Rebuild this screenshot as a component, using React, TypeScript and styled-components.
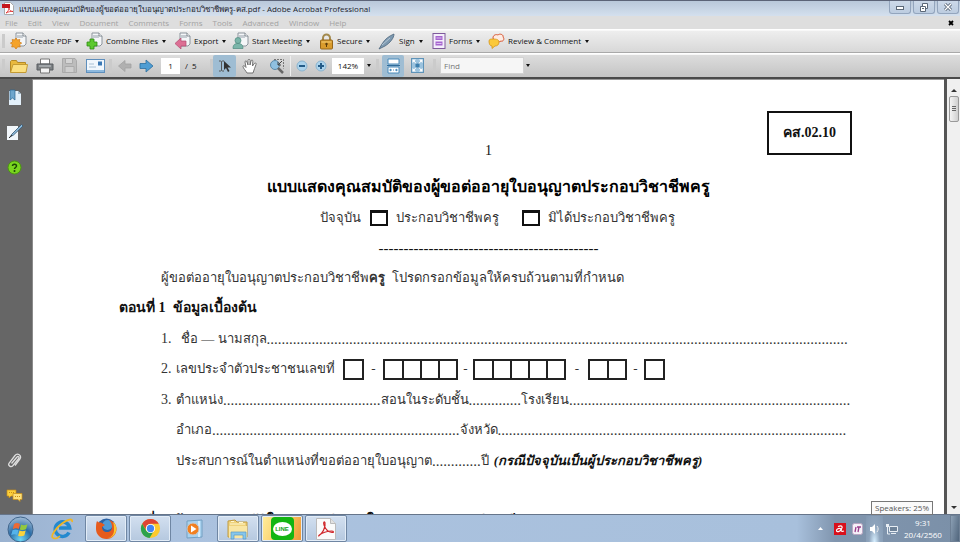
import React from "react";
import styled, { createGlobalStyle } from "styled-components";

const uiFont = `"Open Sans", "Noto Sans", sans-serif`;
const docFont = `"Liberation Serif", serif`;

const GlobalStyle = createGlobalStyle`
  * { box-sizing: border-box; }
  body { margin: 0; background: #fff; font-family: ${uiFont}; font-size: 8px; color: #111; }
  button, input, select { font: inherit; color: inherit; margin: 0; padding: 0; }
  button { border: 0; background: none; cursor: pointer; }
  svg { display: block; flex: none; }
`;

const Desktop = styled.div`
  display: flex;
  flex-direction: column;
  height: 100vh;
  overflow: hidden;
`;

/* ---------- window chrome ---------- */

const TitleBar = styled.header`
  display: flex;
  align-items: center;
  gap: 5px;
  height: 16px;
  flex: none;
  padding-left: 2px;
  border-top: 1px solid #5c6478;
  background: linear-gradient(#b9c8da, #d4e0ee);
`;

const WindowTitle = styled.h1`
  flex: 1;
  margin: 0;
  font-size: 8px;
  line-height: 14px;
  font-weight: 400;
  white-space: nowrap;
  color: #1c232c;
`;

const WindowButtons = styled.div`
  display: flex;
  gap: 2px;
  align-self: flex-start;
  padding-right: 1px;
`;

const WindowButton = styled.button`
  display: grid;
  place-items: center;
  width: 22px;
  height: 13px;
  border: 1px solid #93a5bd;
  border-top: 0;
  border-radius: 0 0 3px 3px;
  background: linear-gradient(#ccd9e9, #bccce0);
`;

const MenuBar = styled.nav`
  display: flex;
  align-items: center;
  height: 13px;
  flex: none;
  gap: 10px;
  padding: 0 4px 0 5px;
  background: #dedede;
  color: #a3a3a3;
`;

const MenuButton = styled.button`
  line-height: 12px;
`;

const CloseDocument = styled.button`
  margin-left: auto;
  width: 8px;
  height: 8px;
`;

const TaskBar = styled.div`
  display: flex;
  align-items: center;
  height: 24px;
  flex: none;
  border-top: 1px solid #fff;
  border-bottom: 1px solid #a9a9a9;
  background: linear-gradient(#efefef, #d8d8d8);
  box-shadow: inset 0 1px #f8f8f8;
  padding-left: 2px;
  gap: 5px;
`;

const ToolBar = styled(TaskBar)`
  gap: 0;
  background: linear-gradient(#dedede, #c4c4c4);
  border-bottom: 0;
`;

const Grip = styled.span`
  width: 3px;
  height: 14px;
  flex: none;
  background: #cbcbcb;
`;

const TaskButton = styled.button<{ $width: number }>`
  display: flex;
  align-items: center;
  gap: 3px;
  width: ${(p) => p.$width}px;
  flex: none;
  line-height: 14px;
  white-space: nowrap;
`;

const Caret = styled.span`
  margin-left: 1px;
  border: 2px solid transparent;
  border-top: 3px solid #111;
  border-bottom: 0;
`;

const ToolButton = styled.button<{ $active?: boolean; $width?: number }>`
  display: grid;
  place-items: center;
  width: ${(p) => p.$width ?? 27}px;
  height: 22px;
  flex: none;
  border-radius: 2px;
  background: ${(p) => (p.$active ? "#9fbdd3" : "transparent")};
`;

const PageBox = styled.input`
  width: 19px;
  height: 16px;
  margin-left: 5px;
  border: 0;
  background: #fff;
  text-align: center;
`;

const PageTotal = styled.span`
  width: 25px;
  margin-left: 5px;
`;

const ZoomBox = styled.input`
  width: 32px;
  height: 16px;
  margin-left: 4px;
  border: 0;
  background: #fff;
  text-align: center;
`;

const FindBox = styled.input`
  width: 84px;
  height: 17px;
  margin-left: 2px;
  border: 1px solid #d2d2d2;
  background: #f6f6f6;
  padding-left: 3px;
  &::placeholder { color: #777; opacity: 1; }
`;

const Separator = styled.span`
  width: 1px;
  height: 20px;
  background: #eee;
`;

/* ---------- document area ---------- */

const Workspace = styled.div`
  display: flex;
  flex: 1;
  min-height: 0;
  border-top: 2px solid #4a4a4a;
  background: #666;
`;

const SidePanel = styled.aside`
  display: flex;
  flex-direction: column;
  align-items: center;
  gap: 15px;
  width: 33px;
  flex: none;
  padding: 8px 3px 9px 0;
  border-right: 1px solid #8b8b8b;
`;

const PanelButton = styled.button<{ $bottom?: boolean }>`
  display: grid;
  place-items: center;
  width: 20px;
  height: 20px;
  margin-top: ${(p) => (p.$bottom ? "auto" : 0)};
`;

const Viewport = styled.main`
  flex: 1;
  min-width: 0;
  overflow: hidden;
  border-top: 1px solid #999;
  background: #fff;
`;

const Page = styled.article`
  padding: 31px 92px 0 86px;
  font-family: ${docFont};
  font-size: 13px;
  line-height: 30px;
  color: #333;
  white-space: nowrap;
`;

const PageHeader = styled.header`
  display: grid;
  grid-template-columns: 1fr auto 1fr;
  align-items: end;
  height: 60px;
  padding-left: 6px;
`;

const PageNumber = styled.span`
  grid-column: 2;
  font-size: 14px;
  line-height: 40px;
  color: #111;
`;

const FormCode = styled.strong`
  justify-self: end;
  align-self: start;
  display: grid;
  place-items: center;
  width: 85px;
  height: 44px;
  border: 2px solid #111;
  font-size: 14px;
  color: #111;
`;

const FormTitle = styled.h2`
  margin: 0;
  padding-left: 6px;
  text-align: center;
  font-size: 16px;
  line-height: 31px;
  color: #000;
`;

const StatusRow = styled.div`
  display: flex;
  justify-content: center;
  align-items: center;
  gap: 9px;
  height: 32px;
  padding-left: 24px;
`;

const StatusOption = styled.label`
  display: flex;
  align-items: center;
  gap: 8px;
  & + & { margin-left: 14px; }
`;

const StatusCheck = styled.input`
  appearance: none;
  width: 18px;
  height: 16px;
  margin: 0;
  border: 2px solid #111;
  border-top-width: 3px;
`;

const DashRule = styled.div`
  padding-left: 6px;
  text-align: center;
  font-size: 15px;
  line-height: 29px;
  color: #111;
`;

const Intro = styled.p`
  margin: 0;
  padding-left: 42px;
`;

const SectionTitle = styled.h3`
  margin: 0;
  font-size: 14px;
  line-height: 30px;
  color: #111;
`;

const FormRow = styled.div<{ $sub?: boolean; $short?: boolean }>`
  display: flex;
  align-items: center;
  height: ${(p) => (p.$short ? 30 : 31)}px;
  padding-left: ${(p) => (p.$sub ? 57 : 42)}px;
`;

const ItemNumber = styled.span`
  width: 15px;
  flex: none;
  font-size: 14px;
`;

const NameLabel = styled.span`
  padding-left: 5px;
`;

const Leader = styled.span`
  font-size: 15px;
`;

const DigitGroups = styled.div`
  display: flex;
  align-items: center;
  margin-left: 8px;
`;

const DigitGroup = styled.span`
  display: flex;
  border: 2px solid #222;
`;

const Digit = styled.span`
  width: 17px;
  height: 17px;
  & + & {
    width: 18px;
    border-left: 2px solid #222;
  }
`;

const Dash = styled.span<{ $width: number }>`
  width: ${(p) => p.$width}px;
  text-align: center;
`;

const Note = styled.strong`
  margin-left: 5px;
  font-style: italic;
  color: #111;
`;

const ScrollTrack = styled.div`
  display: flex;
  flex-direction: column;
  align-items: center;
  width: 16px;
  flex: none;
  padding-top: 5px;
  border-left: 3px solid #555;
  background: #f0f0f0;
`;

const ScrollArrow = styled.button<{ $down?: boolean }>`
  display: grid;
  place-items: center;
  width: 12px;
  height: 12px;
  margin-top: ${(p) => (p.$down ? "auto" : 0)};
`;

const ScrollThumb = styled.div`
  display: grid;
  place-items: center;
  width: 10px;
  height: 26px;
  border: 1px solid #999;
  border-radius: 2px;
  background: linear-gradient(90deg, #f4f4f4, #cfcfcf);
`;

/* ---------- desktop task bar ---------- */

const WindowsBar = styled.footer`
  position: relative;
  display: flex;
  align-items: stretch;
  height: 28px;
  flex: none;
  padding-left: 1px;
  border-top: 1px solid #66758a;
  background: linear-gradient(90deg, #9ab2d0, #abc2df 15%, #a8c0dc 83%, #8095ae 87%, #7b90a8);
`;

const AppButton = styled.button<{ $open?: boolean; $alert?: boolean; $width?: number }>`
  display: grid;
  place-items: center;
  width: ${(p) => p.$width ?? 42}px;
  flex: none;
  margin-right: 2px;
  border: 1px solid ${(p) => (p.$open ? "#6f86a3" : "transparent")};
  border-radius: 2px;
  background: ${(p) =>
    p.$alert
      ? "linear-gradient(110deg, #ffef9d, #f7c25c 60%, #ee9433)"
      : p.$open
        ? "linear-gradient(#d3e0f0, #b5c8df)"
        : "none"};
  box-shadow: ${(p) => (p.$open ? "inset 0 0 0 1px #e2ecf7" : "none")};
`;

const Tray = styled.div`
  display: flex;
  align-items: center;
  margin-left: auto;
`;

const TrayButton = styled.button<{ $width: number; $hover?: boolean }>`
  display: grid;
  place-items: center;
  width: ${(p) => p.$width}px;
  height: 26px;
  background: ${(p) =>
    p.$hover ? "radial-gradient(ellipse at 50% 100%, #d7efff, #8fa5bd 45%, #8298b1)" : "none"};
`;

const Clock = styled.time`
  display: flex;
  flex-direction: column;
  align-items: center;
  width: 46px;
  line-height: 12px;
  color: #fff;
`;

const ShowDesktop = styled.button`
  width: 10px;
  height: 27px;
  margin-left: 4px;
  border: 1px solid #6e8095;
  background: linear-gradient(100deg, #8ca0b5, #50657c);
`;

const Tooltip = styled.div`
  position: absolute;
  right: 27px;
  bottom: 27px;
  padding: 0 3px;
  border: 1px solid #777;
  background: #fafafa;
  line-height: 12px;
  color: #555;
`;

/* ---------- icons ---------- */

type Badge = "star" | "plus" | "arrow" | "person";

const PaperIcon = ({ badge }: { badge: Badge }) => (
  <svg width="17" height="18" viewBox="0 0 17 18">
    <path d="M6 1h7l3 3v8l-2 2H6z" fill="#f4f6f8" stroke="#8c949c" />
    <path d="M7 3h6v3H7z" fill="#c5cbd1" />
    <path d="M13 1v3h3" fill="#fff" stroke="#6b737b" strokeWidth=".8" />
    {badge === "star" && (
      <path d="M6 6l1.400 2 2.400-.6-.4 2.500 2.300 1.200-2.100 1.400.7 2.500-2.600-.2L6 17l-1.700-2.200-2.600.2.7-2.500-2-1.400 2.200-1.200-.4-2.500 2.400.6z" fill="#f5a32a" stroke="#cf7a14" strokeWidth=".7" />
    )}
    {badge === "plus" && <path d="M4 7h4v3h3v4H8v3H4v-3H1v-4h3z" fill="#5cc92e" stroke="#2d8a15" strokeWidth=".8" />}
    {badge === "arrow" && <path d="M7 6v3h5v5H7v3l-6-5.500z" fill="#dc6f94" stroke="#b34870" strokeWidth=".7" />}
    {badge === "person" && (
      <g fill="#7bb5a9" stroke="#4d897e" strokeWidth=".7">
        <path d="M1 16.500c0-4 2-5 5-5s5 1 5 5z" />
        <circle cx="6" cy="8.500" r="3" />
      </g>
    )}
  </svg>
);

const LockIcon = () => (
  <svg width="15" height="17" viewBox="0 0 15 17">
    <path d="M4 8V5a3.500 3.500 0 017 0v3" fill="none" stroke="#a38a4e" strokeWidth="2" />
    <rect x="1.500" y="7" width="12" height="9" rx="1" fill="#d99b2c" stroke="#96661a" />
    <path d="M2.500 9h10" stroke="#f3cd76" />
    <circle cx="7.500" cy="11" r="1.200" fill="#5b3b0b" />
    <path d="M7.500 11v3" stroke="#5b3b0b" />
  </svg>
);

const PenIcon = () => (
  <svg width="18" height="17" viewBox="0 0 18 17">
    <path d="M1 16l3-5C7 6 11 3 16 1c0 4-4 9-9 12z" fill="#7d99b0" stroke="#4c667c" strokeWidth=".8" />
    <path d="M4 12L12 5" stroke="#b4c6d4" />
  </svg>
);

const FormsIcon = () => (
  <svg width="14" height="16" viewBox="0 0 14 16">
    <rect x="1" y=".5" width="12" height="15" fill="#f4eefb" stroke="#7f5a9c" />
    <path d="M3.500 3h7v4h-7zM3.500 8.500h7v4h-7z" fill="#a665cf" />
    <path d="M4.500 5h5M4.500 10.500h5" stroke="#dcc0f0" />
  </svg>
);

const ReviewIcon = () => (
  <svg width="17" height="16" viewBox="0 0 17 16">
    <path d="M5 5c0-3 3-4 5-3 2-2 6 0 5 2 2 2 0 5-2 4-3 2-7 1-8-3z" fill="#fdebe3" stroke="#d9542f" />
    <path d="M1 8c0-2 2-2 4-2s6 0 6 3-2 4-4 4l-3 2.500V13c-2 0-3-2-3-5z" fill="#fbc93a" stroke="#d6961b" strokeWidth=".8" />
  </svg>
);

const PdfIcon = () => (
  <svg width="12" height="13" viewBox="0 0 12 13">
    <path d="M2.500.5h6l3 3v9h-9z" fill="#fff" stroke="#aaa" />
    <path d="M0 2h8v4H0z" fill="#c5161d" />
    <path d="M4 11c2-1 3-4 3-5 0 2 2 3.500 4 3.500-2-.5-5 .5-7 1.500z" fill="none" stroke="#d22" strokeWidth=".8" />
  </svg>
);

const FolderIcon = () => (
  <svg width="20" height="16" viewBox="0 0 20 16">
    <path d="M1.500 14V3.500l1-1h5l1 2h8V14z" fill="#e9b93e" stroke="#b58a25" />
    <path d="M1.500 14.500L4 6.500h14.500L17 14.500z" fill="#fbdf80" stroke="#c39a33" />
  </svg>
);

const PrinterIcon = () => (
  <svg width="18" height="16" viewBox="0 0 18 16">
    <path d="M4.500 1h9v5h-9z" fill="#fff" stroke="#777" />
    <path d="M1 6h16v6H1z" fill="#7d8184" stroke="#595d60" />
    <path d="M3 8h12" stroke="#c9cdd0" />
    <path d="M4.500 10h9v5h-9z" fill="#f4f4f4" stroke="#777" />
  </svg>
);

const DiskIcon = () => (
  <svg width="15" height="15" viewBox="0 0 15 15" stroke="#aaa">
    <path d="M.5.5H13l1.500 2v12H.5z" fill="#bdbdbd" />
    <path d="M3.500.5h7v5h-7z" fill="#d4d4d4" />
    <path d="M3 8.500h9v6H3z" fill="#cfcfcf" />
  </svg>
);

const MailIcon = () => (
  <svg width="19" height="14" viewBox="0 0 19 14">
    <rect x=".5" y=".5" width="18" height="13" fill="#f1f7fd" stroke="#5e8fbd" />
    <path d="M1 11h17v2H1z" fill="#8db9de" />
    <path d="M12 2.500h4v4h-4z" fill="#3b78b4" />
    <path d="M3 5h5M3 8h7" stroke="#a9c0d4" />
  </svg>
);

const ArrowIcon = ({ next }: { next?: boolean }) => (
  <svg width="15" height="14" viewBox="0 0 15 14">
    <path
      d={next ? "M1 4.500h6V1l7 6-7 6V9.500H1z" : "M14 5H8V1.500L1.500 7 8 12.500V9h6z"}
      fill={next ? "#4e9dd3" : "#b0b0b0"}
      stroke={next ? "#2c6f9f" : "#a2a2a2"}
      strokeWidth=".8"
    />
  </svg>
);

const SelectIcon = () => (
  <svg width="14" height="14" viewBox="0 0 14 14">
    <path d="M1 2h1.500l1 .7 1-.7H6M3.500 2.500v9M1 12h1.500l1-.7 1 .7H6" fill="none" stroke="#555" />
    <path d="M6 2v9l2-2 2 4 1.500-1-2-3.500H13z" fill="#333" />
  </svg>
);

const HandIcon = () => (
  <svg width="16" height="16" viewBox="0 0 16 16">
    <path
      d="M5 15c-1-2-4-5-4-6.500S3 8 4 9.500L3 4c0-1.500 1.600-1.500 2 0l1 3V2.500c0-1.600 2-1.600 2 0V7l1-4c.3-1.500 2-1.200 1.800.3L10.500 8l1.800-2.500c.9-1.200 2.300-.3 1.700 1C13 9 12 12 11 15z"
      fill="#fff"
      stroke="#666"
      strokeWidth=".9"
    />
  </svg>
);

const MarqueeIcon = () => (
  <svg width="16" height="16" viewBox="0 0 16 16">
    <path d="M5 1.500h9.500v9" fill="none" stroke="#777" strokeDasharray="2 1" />
    <circle cx="6" cy="7" r="4.500" fill="#8fc0e0" stroke="#5b89a8" />
    <path d="M9 10l5 5" stroke="#666" strokeWidth="2.500" />
    <path d="M13 3l-4 4m0-3v3h3" fill="none" stroke="#444" />
  </svg>
);

const ZoomStepIcon = ({ plus }: { plus?: boolean }) => (
  <svg width="12" height="12" viewBox="0 0 12 12">
    <circle cx="6" cy="6" r="5" fill="#acd3ec" stroke="#8bb4cf" />
    <path d={plus ? "M3 6h6M6 3v6" : "M3 6h6"} stroke="#245c88" strokeWidth="2" />
  </svg>
);

const ContinuousIcon = () => (
  <svg width="13" height="16" viewBox="0 0 13 16">
    <path d="M1 1h11v5H1zM1 9h11v6H1z" fill="#fff" stroke="#4a8bbb" />
    <path d="M0 7.500h13" stroke="#2f6c9b" />
    <path d="M2 12l2-1.500v3zM11 12l-2-1.500v3z" fill="#4a8bbb" />
    <path d="M4 12h5" stroke="#4a8bbb" strokeDasharray="1 1" />
  </svg>
);

const FitIcon = () => (
  <svg width="13" height="15" viewBox="0 0 13 15">
    <rect x=".5" y=".5" width="12" height="14" fill="#9cc3de" stroke="#5f93b8" />
    <path d="M1.500 5V1.500H5zM8 1.500h3.500V5zM1.500 10v3.500H5zM11.500 10v3.500H8z" fill="#fff" />
    <path d="M3 3l2.500 3M10 3L7.500 6M3 12l2.500-3M10 12L7.500 9" stroke="#fff" />
    <path d="M4.500 5.500h4v4h-4z" fill="#3d7fae" />
  </svg>
);

const BookmarkIcon = () => (
  <svg width="14" height="17" viewBox="0 0 14 17">
    <path d="M1 2h9l3 3v11H1z" fill="#e3f0fa" />
    <path d="M10 2v3h3z" fill="#9fb9cc" />
    <path d="M2 1h5v10l-2.500-2L2 11z" fill="#6ea6cd" stroke="#2c6690" strokeWidth=".7" />
  </svg>
);

const SignatureIcon = () => (
  <svg width="18" height="18" viewBox="0 0 18 18">
    <path d="M1 3h11v14H1z" fill="#f2f7fb" />
    <path d="M4 14l2-3 9.500-9.500 1.500 1.500-9.500 9z" fill="#8dbbdc" stroke="#36566e" strokeWidth=".8" />
    <path d="M3 15l3-3" stroke="#333" />
  </svg>
);

const HelpIcon = () => (
  <svg width="15" height="15" viewBox="0 0 15 15">
    <circle cx="7.500" cy="7.500" r="6.500" fill="#79d51f" stroke="#4c970f" />
    <path d="M5.500 6c0-2.500 4-2.500 4 0 0 1.500-2 1.500-2 3" fill="none" stroke="#1c4505" strokeWidth="1.500" />
    <circle cx="7.500" cy="11" r="1" fill="#1c4505" />
  </svg>
);

const ClipIcon = () => (
  <svg width="15" height="17" viewBox="0 0 15 17" fill="none" stroke="#dedede" strokeWidth="1.300">
    <path d="M4.500 11.500L10 5c1-1.300 2.700 0 1.700 1.300L6 13.500c-2 2.300-5.500.3-3.800-2.500L8 3.500C10.500.5 15 3.500 13 7l-5 6.500" />
  </svg>
);

const CommentsIcon = () => (
  <svg width="17" height="13" viewBox="0 0 17 13">
    <path d="M1 1h9v6H5L3 9V7H1z" fill="#fbd03c" stroke="#c98e14" strokeWidth=".7" />
    <path d="M7 4.500h9v6h-2V12.500l-2-2H7z" fill="#fce07a" stroke="#c98e14" strokeWidth=".7" />
    <path d="M3 3.500h5M9 7.500h5" stroke="#c98e14" strokeDasharray="1 1" />
  </svg>
);

const StartIcon = () => (
  <svg width="27" height="27" viewBox="0 0 27 27">
    <defs>
      <radialGradient id="orb" cx=".5" cy=".9" r=".9">
        <stop offset="0" stopColor="#6fd7f5" />
        <stop offset=".5" stopColor="#2a6da8" />
        <stop offset="1" stopColor="#a3bdd6" />
      </radialGradient>
    </defs>
    <circle cx="13.500" cy="13.500" r="12.500" fill="url(#orb)" stroke="#3f648b" />
    <path d="M7 8c2-1.300 4-1.200 6 0l-1.200 5c-2-1-4-1-6 .2z" fill="#ee6a35" />
    <path d="M14 8.500c2 1 4 1 6.500-.3l-1.500 5c-2 1-4 1-6.200.2z" fill="#93c83e" />
    <path d="M5.500 14.200c2-1.100 4-1 6-.1l-1.300 5c-2-1-4-1-6 .1z" fill="#55b3ea" />
    <path d="M12.500 14.500c2 .9 4 .9 6.200 0l-1.400 5c-2 1-4 1-6.200.2z" fill="#fcd33c" />
  </svg>
);

const ExplorerIcon = () => (
  <svg width="23" height="22" viewBox="0 0 23 22">
    <path d="M18 14.500a7.300 7.300 0 11.700-4.500H8" fill="none" stroke="#2489cf" strokeWidth="3.500" />
    <path d="M2 20c-3-2 3-10 9-14.500S22 0 21 4" fill="none" stroke="#efb625" strokeWidth="1.800" />
    <path d="M2 20c2 1 5 0 7-2" fill="none" stroke="#efb625" strokeWidth="1.500" />
  </svg>
);

const FirefoxIcon = () => (
  <svg width="23" height="23" viewBox="0 0 23 23">
    <circle cx="11.500" cy="11" r="9.500" fill="#2d64a6" />
    <circle cx="12.500" cy="8" r="5" fill="#4f9ad6" />
    <path d="M2 4c1 1 2 1.500 4 1.500L10 8l-3 2c0 3 2 5 5 5 3 0 5-2 5-5 0-3-1-5-3-7 4 1 7 4 7.500 8 .5 6-4 11-10 11S1 17.500 1 12c0-3 0-6 1-8z" fill="#e65b1d" />
    <path d="M18 5c3 2 4 6 3 9-1 4-4 7-8 7 4-1 6-4 6-8 0-3 0-5-1-8z" fill="#fbc62e" />
  </svg>
);

const ChromeIcon = () => (
  <svg width="21" height="21" viewBox="0 0 22 22">
    <circle cx="11" cy="11" r="10" fill="#fcca2e" />
    <path d="M2.300 6A10 10 0 0119.700 6H11a5 5 0 00-4.700 6.500z" fill="#de4335" />
    <path d="M2.300 6A10 10 0 0010 21l4.500-7.500A5 5 0 016.700 13.500z" fill="#2da24c" />
    <circle cx="11" cy="11" r="4.800" fill="#fff" />
    <circle cx="11" cy="11" r="3.800" fill="#4285f4" />
  </svg>
);

const MediaIcon = () => (
  <svg width="21" height="20" viewBox="0 0 21 20">
    <path d="M3 2l15-1v17l-15 1z" fill="#a9d2ee" stroke="#739fc2" />
    <path d="M15 2v16" stroke="#d7ecfa" strokeWidth="2" />
    <circle cx="9" cy="10" r="6" fill="#f28020" stroke="#c8c8c8" />
    <path d="M7 6.500l5.500 3.500L7 13.500z" fill="#fff" />
  </svg>
);

const FilesIcon = () => (
  <svg width="24" height="22" viewBox="0 0 24 22">
    <path d="M2 3l7-1 2 2h10v15H2z" fill="#efd27b" stroke="#bf9a42" />
    <path d="M4 6h15M5 3.500h3m5 1h4" stroke="#fff6cf" />
    <path d="M3 8h18v12H3z" fill="#f9e6a4" />
    <path d="M5 21v-7h15v7h-3v-4H8v4z" fill="#86c6ec" stroke="#5999c4" strokeWidth=".7" />
  </svg>
);

const LineLogo = styled.span`
  display: grid;
  place-items: center;
  width: 23px;
  height: 23px;
  border-radius: 4px;
  background: #13b512;
`;

const LineBubble = styled.span`
  display: grid;
  place-items: center;
  width: 19px;
  height: 14px;
  border-radius: 50%;
  background: #fff;
  color: #13a012;
  font: bold 6px/8px "Liberation Sans", sans-serif;
`;

const AcrobatIcon = () => (
  <svg width="22" height="24" viewBox="0 0 22 24">
    <path d="M1.500 1.500h14l5 5v16h-19z" fill="#fafafa" stroke="#bbb" />
    <path d="M15.500 1.500v5h5" fill="#e2e2e2" stroke="#bbb" />
    <path d="M4 18.500c3-1.500 7-8 6-12.500-.5-2-2-1-1 2 1.300 4 4 7 8 7.500 2 .2 2-1.500-.5-1.500-4 0-10 2-12 4-1 1.200-1.200 1-.5.5z" fill="none" stroke="#d0272b" strokeWidth="1.200" />
  </svg>
);

const AviraIcon = () => (
  <svg width="12" height="12" viewBox="0 0 12 12">
    <rect width="12" height="12" fill="#d9101b" />
    <path d="M4 3.500c4-1.500 5 0 3.500 2.500C6 9 2.500 9.500 2.500 7.500S5.500 5 7 6M7.500 6c-1 2 0 3 2.500 2" fill="none" stroke="#fff" strokeWidth="1.200" />
  </svg>
);

const LanguageIcon = () => (
  <svg width="11" height="12" viewBox="0 0 11 12">
    <rect x=".5" y=".5" width="10" height="11" rx="2" fill="#f6f0f8" stroke="#b9a6c2" />
    <path d="M3 9l1-5M5 4h4M7 4L6 9" stroke="#9b3e8c" strokeWidth="1.300" />
  </svg>
);

const SpeakerIcon = () => (
  <svg width="10" height="12" viewBox="0 0 10 12">
    <path d="M0 4h2l3-3v10L2 8H0z" fill="#fff" />
    <path d="M7 3c1.500 2 1.500 4 0 6" fill="none" stroke="#eee" />
  </svg>
);

const NetworkIcon = () => (
  <svg width="12" height="12" viewBox="0 0 12 12">
    <path d="M3.500 3.500h8v5h-8z" fill="#6e8298" stroke="#e8eef4" />
    <path d="M5 10.500h5" stroke="#e8eef4" />
    <path d="M1.500 1v4m0 0v6H4" fill="none" stroke="#e8eef4" />
    <path d="M0 1h3v3H0z" fill="#e8eef4" />
  </svg>
);

const tasks = [
  { label: "Create PDF", width: 71, icon: <PaperIcon badge="star" /> },
  { label: "Combine Files", width: 83, icon: <PaperIcon badge="plus" /> },
  { label: "Export", width: 53, icon: <PaperIcon badge="arrow" /> },
  { label: "Start Meeting", width: 82, icon: <PaperIcon badge="person" /> },
  { label: "Secure", width: 54, icon: <LockIcon /> },
  { label: "Sign", width: 49, icon: <PenIcon /> },
  { label: "Forms", width: 51, icon: <FormsIcon /> },
  { label: "Review & Comment", width: 110, icon: <ReviewIcon /> },
];

const menus = ["File", "Edit", "View", "Document", "Comments", "Forms", "Tools", "Advanced", "Window", "Help"];

const idGroups = [1, 4, 5, 2, 1];
const idDashes = [19, 15, 22, 17];

const Fill = ({ dots }: { dots: number }) => <Leader>{".".repeat(dots)}</Leader>;

export default function App() {
  return (
    <Desktop>
      <GlobalStyle />
      <TitleBar>
        <PdfIcon />
        <WindowTitle>แบบแสดงคุณสมบัติของผู้ขอต่ออายุใบอนุญาตประกอบวิชาชีพครู-คส.pdf - Adobe Acrobat Professional</WindowTitle>
        <WindowButtons>
          <WindowButton aria-label="Minimize">
            <svg width="10" height="8" viewBox="0 0 10 8"><rect x="1.500" y="3.500" width="7" height="3" fill="#fff" stroke="#5b6878" /></svg>
          </WindowButton>
          <WindowButton aria-label="Restore">
            <svg width="10" height="9" viewBox="0 0 10 9" fill="#fff" stroke="#5b6878"><path d="M3.500.5h5v5h-5z" /><path d="M1.500 3.500h5v5h-5zM3 5.500h2" /></svg>
          </WindowButton>
          <WindowButton aria-label="Close">
            <svg width="10" height="8" viewBox="0 0 10 8"><path d="M2 1l6 6M8 1L2 7" stroke="#5b6878" strokeWidth="3" /><path d="M2 1l6 6M8 1L2 7" stroke="#fff" strokeWidth="1.200" /></svg>
          </WindowButton>
        </WindowButtons>
      </TitleBar>
      <MenuBar>
        {menus.map((m) => (
          <MenuButton key={m}>{m}</MenuButton>
        ))}
        <CloseDocument aria-label="Close document">
          <svg width="6" height="6" viewBox="0 0 6 6"><path d="M1 1l4 4M5 1L1 5" stroke="#000" strokeWidth="1.800" /></svg>
        </CloseDocument>
      </MenuBar>
      <TaskBar>
        <Grip />
        {tasks.map((t) => (
          <TaskButton key={t.label} $width={t.width}>
            {t.icon}
            {t.label}
            <Caret />
          </TaskButton>
        ))}
      </TaskBar>
      <ToolBar>
        <Grip />
        <ToolButton aria-label="Open"><FolderIcon /></ToolButton>
        <ToolButton aria-label="Print" $width={25}><PrinterIcon /></ToolButton>
        <ToolButton aria-label="Save" $width={25}><DiskIcon /></ToolButton>
        <ToolButton aria-label="Email"><MailIcon /></ToolButton>
        <Grip />
        <ToolButton aria-label="Previous page" $width={24}><ArrowIcon /></ToolButton>
        <ToolButton aria-label="Next page" $width={20}><ArrowIcon next /></ToolButton>
        <PageBox aria-label="Page" defaultValue="1" />
        <PageTotal>/&nbsp; 5</PageTotal>
        <Grip />
        <ToolButton aria-label="Select" $active $width={23}><SelectIcon /></ToolButton>
        <ToolButton aria-label="Hand"><HandIcon /></ToolButton>
        <ToolButton aria-label="Marquee zoom"><MarqueeIcon /></ToolButton>
        <Separator />
        <ToolButton aria-label="Zoom out" $width={22}><ZoomStepIcon /></ToolButton>
        <ToolButton aria-label="Zoom in" $width={15}><ZoomStepIcon plus /></ToolButton>
        <ZoomBox aria-label="Zoom" defaultValue="142%" />
        <ToolButton aria-label="Zoom levels" $width={8}><Caret /></ToolButton>
        <ToolButton as="span" $width={10}><Grip /></ToolButton>
        <ToolButton aria-label="Scrolling pages" $active $width={22}><ContinuousIcon /></ToolButton>
        <ToolButton aria-label="Fit page"><FitIcon /></ToolButton>
        <ToolButton as="span" $width={7}><Grip /></ToolButton>
        <FindBox aria-label="Find" placeholder="Find" />
        <ToolButton aria-label="Find options" $width={7}><Caret /></ToolButton>
      </ToolBar>

      <Workspace>
        <SidePanel>
          <PanelButton aria-label="Bookmarks"><BookmarkIcon /></PanelButton>
          <PanelButton aria-label="Signatures"><SignatureIcon /></PanelButton>
          <PanelButton aria-label="How to"><HelpIcon /></PanelButton>
          <PanelButton aria-label="Attachments" $bottom><ClipIcon /></PanelButton>
          <PanelButton aria-label="Comments"><CommentsIcon /></PanelButton>
        </SidePanel>
        <Viewport>
          <Page>
            <PageHeader>
              <PageNumber>1</PageNumber>
              <FormCode>คส.02.10</FormCode>
            </PageHeader>
            <FormTitle>แบบแสดงคุณสมบัติของผู้ขอต่ออายุใบอนุญาตประกอบวิชาชีพครู</FormTitle>
            <StatusRow>
              <span>ปัจจุบัน</span>
              <StatusOption><StatusCheck type="checkbox" />ประกอบวิชาชีพครู</StatusOption>
              <StatusOption><StatusCheck type="checkbox" />มิได้ประกอบวิชาชีพครู</StatusOption>
            </StatusRow>
            <DashRule>{"-".repeat(44)}</DashRule>
            <Intro>ผู้ขอต่ออายุใบอนุญาตประกอบวิชาชีพ<b>ครู</b>&nbsp; โปรดกรอกข้อมูลให้ครบถ้วนตามที่กำหนด</Intro>
            <SectionTitle>ตอนที่ 1&nbsp; ข้อมูลเบื้องต้น</SectionTitle>
            <FormRow>
              <ItemNumber>1.</ItemNumber>
              <NameLabel>ชื่อ — นามสกุล</NameLabel>
              <Fill dots={155} />
            </FormRow>
            <FormRow $short>
              <ItemNumber>2.</ItemNumber>เลขประจำตัวประชาชนเลขที่
              <DigitGroups>
                {idGroups.map((count, g) => (
                  <React.Fragment key={g}>
                    <DigitGroup>
                      {Array.from({ length: count }, (_, i) => (
                        <Digit key={i} />
                      ))}
                    </DigitGroup>
                    {g < idDashes.length && <Dash $width={idDashes[g]}>-</Dash>}
                  </React.Fragment>
                ))}
              </DigitGroups>
            </FormRow>
            <FormRow>
              <ItemNumber>3.</ItemNumber>ตำแหน่ง<Fill dots={42} />สอนในระดับชั้น<Fill dots={14} />โรงเรียน<Fill dots={75} />
            </FormRow>
            <FormRow $sub $short>
              อำเภอ<Fill dots={66} />จังหวัด<Fill dots={93} />
            </FormRow>
            <FormRow $sub>
              ประสบการณ์ในตำแหน่งที่ขอต่ออายุใบอนุญาต<Fill dots={13} />ปี
              <Note>(กรณีปัจจุบันเป็นผู้ประกอบวิชาชีพครู)</Note>
            </FormRow>
            <FormRow $short />
            <SectionTitle>ตอนที่ 2&nbsp; ข้อมูลคุณสมบัติในการขอต่ออายุใบอนุญาตประกอบวิชาชีพครู</SectionTitle>
          </Page>
        </Viewport>
        <ScrollTrack>
          <ScrollArrow aria-label="Scroll up">
            <svg width="6" height="4" viewBox="0 0 6 4"><path d="M0 4l3-3 3 3z" fill="#333" /></svg>
          </ScrollArrow>
          <ScrollThumb>
            <svg width="4" height="6" viewBox="0 0 4 6"><path d="M0 .5h4M0 2.500h4M0 4.500h4" stroke="#666" /></svg>
          </ScrollThumb>
          <ScrollArrow $down aria-label="Scroll down">
            <svg width="6" height="4" viewBox="0 0 6 4"><path d="M0 0l3 3 3-3z" fill="#333" /></svg>
          </ScrollArrow>
        </ScrollTrack>
      </Workspace>

      <WindowsBar>
        <AppButton aria-label="Start" $width={38}><StartIcon /></AppButton>
        <AppButton aria-label="Internet Explorer"><ExplorerIcon /></AppButton>
        <AppButton aria-label="Firefox" $open><FirefoxIcon /></AppButton>
        <AppButton aria-label="Chrome" $open><ChromeIcon /></AppButton>
        <AppButton aria-label="Media Player"><MediaIcon /></AppButton>
        <AppButton aria-label="File Explorer" $open><FilesIcon /></AppButton>
        <AppButton $open $alert><LineLogo><LineBubble>LINE</LineBubble></LineLogo></AppButton>
        <AppButton aria-label="Acrobat" $open><AcrobatIcon /></AppButton>
        <Tray>
          <TrayButton aria-label="Show hidden icons" $width={22}>
            <svg width="5" height="3" viewBox="0 0 5 3"><path d="M0 3l2.500-3L5 3z" fill="#fff" /></svg>
          </TrayButton>
          <TrayButton aria-label="Avira" $width={17}><AviraIcon /></TrayButton>
          <TrayButton aria-label="Input language" $width={18}><LanguageIcon /></TrayButton>
          <TrayButton aria-label="Volume" $width={17} $hover><SpeakerIcon /></TrayButton>
          <TrayButton aria-label="Network" $width={17}><NetworkIcon /></TrayButton>
          <Clock><span>9:31</span><span>20/4/2560</span></Clock>
          <ShowDesktop aria-label="Show desktop" />
        </Tray>
        <Tooltip role="tooltip">Speakers: 25%</Tooltip>
      </WindowsBar>
    </Desktop>
  );
}
